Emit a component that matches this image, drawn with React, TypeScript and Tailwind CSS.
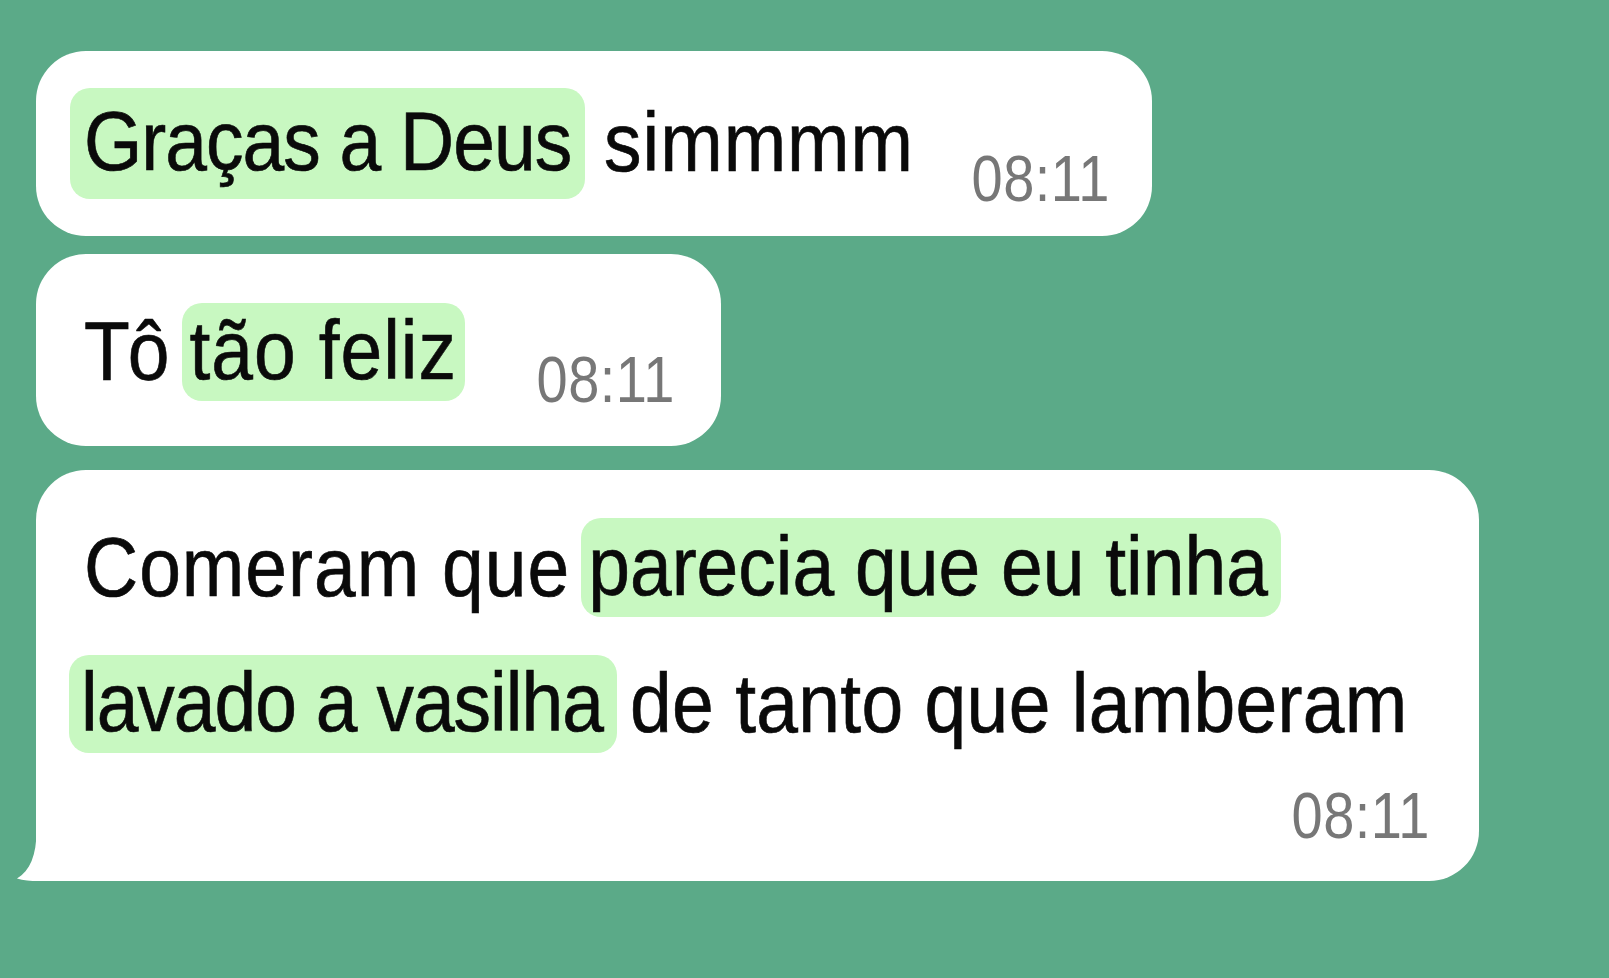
import React from "react";

const FONT = "font-['Liberation_Sans',Arial,Helvetica,sans-serif]";

function T({ children, className = "" }: { children: React.ReactNode; className?: string }) {
  return (
    <span
      className={`block shrink-0 whitespace-pre text-[75px] leading-[75px] text-[#0a0a0a] [-webkit-text-stroke:0.6px_#0a0a0a] scale-y-[1.1] ${className}`}
    >
      {children}
    </span>
  );
}

function Time() {
  return (
    <span className="block shrink-0 whitespace-pre text-[56px] leading-[56px] text-[#777777] tracking-[0.5px] scale-y-[1.15]">
      08:11
    </span>
  );
}

export default function App() {
  return (
    <div className={`min-h-screen w-full overflow-hidden bg-[#5baa88] pt-[51px] ${FONT}`}>
      {/* Bubble 1 */}
      <div className="ml-[36px] flex h-[185px] w-[1116px] items-start rounded-[50px] bg-white pl-[34px] pr-[42px] pt-[37px]">
        <span className="flex h-[111px] w-[515px] shrink-0 rounded-[20px] bg-[#c8f8c1] pl-[14px] pt-[17px]">
          <T className="tracking-[-1px]">Graças a Deus</T>
        </span>
        <span className="ml-[19px] flex pt-[17px]">
          <T className="tracking-[1px]">simmmm</T>
        </span>
        <span className="ml-auto mt-[63px] flex">
          <Time />
        </span>
      </div>

      {/* Bubble 2 */}
      <div className="ml-[36px] mt-[18px] flex h-[192px] w-[685px] items-start rounded-[50px] bg-white pl-[48px] pr-[46px] pt-[49px]">
        <span className="flex pt-[11px]">
          <T className="tracking-[-2px]">Tô</T>
        </span>
        <span className="ml-[14px] flex h-[98px] w-[283px] shrink-0 rounded-[20px] bg-[#c8f8c1] pl-[8px] pt-[11px]">
          <T className="tracking-[1px]">tão feliz</T>
        </span>
        <span className="ml-auto mt-[49px] flex">
          <Time />
        </span>
      </div>

      {/* Bubble 3 */}
      <div className="relative ml-[36px] mt-[24px] flex h-[411px] w-[1443px] flex-col rounded-[50px] rounded-bl-none bg-white pl-[48px] pr-[49px] pt-[48px]">
        <div className="flex items-start">
          <span className="flex pt-[12px]">
            <T className="tracking-[1px]">Comeram que</T>
          </span>
          <span className="ml-[11px] flex h-[99px] w-[700px] shrink-0 rounded-[20px] bg-[#c8f8c1] pl-[7px] pt-[12px]">
            <T>parecia que eu tinha</T>
          </span>
        </div>
        <div className="mt-[38px] flex items-start">
          <span className="-ml-[15px] flex h-[98px] w-[548px] shrink-0 rounded-[20px] bg-[#c8f8c1] pl-[12px] pt-[11px]">
            <T className="tracking-[-1px]">lavado a vasilha</T>
          </span>
          <span className="ml-[13px] flex pt-[11px]">
            <T className="tracking-[0.3px]">de tanto que lamberam</T>
          </span>
        </div>
        <div className="mt-[35px] flex justify-end">
          <Time />
        </div>
        <svg
          className="absolute bottom-0 left-[-21px]"
          width="25"
          height="50"
          viewBox="0 0 25 50"
          aria-hidden="true"
        >
          <path d="M21.5 0 C21.5 24 15 40 2 47.5 C8 49.5 16 50 23 50 L23 0 Z" fill="#ffffff" />
        </svg>
      </div>
    </div>
  );
}
